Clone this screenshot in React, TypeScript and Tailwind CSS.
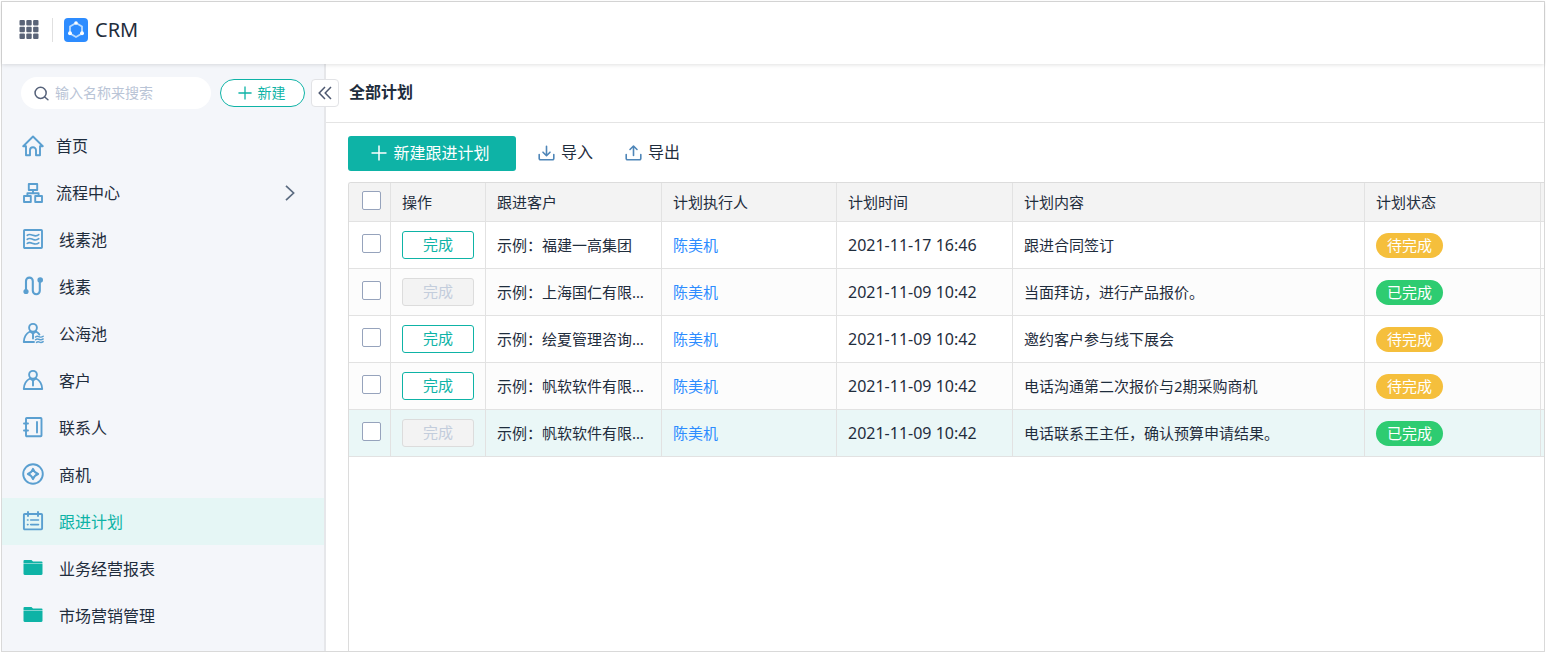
import { useState, type ReactNode } from 'react';

const BLUE = '#5a9fd0';

// 侧边栏图标，统一 22x22
function NavIcon({ children }: { children: ReactNode }) {
  return (
    <svg
      width="22"
      height="22"
      viewBox="0 0 22 22"
      fill="none"
      stroke={BLUE}
      strokeWidth="1.9"
      strokeLinecap="round"
      strokeLinejoin="round"
      aria-hidden="true"
    >
      {children}
    </svg>
  );
}

const HomeIcon = () => (
  <NavIcon>
    <path d="M1.2 11.2L11 1.5L20.8 11.2H18V20.2H14V15.2A3 3 0 0 0 8 15.2V20.2H4V11.2Z" />
  </NavIcon>
);

const FlowIcon = () => (
  <NavIcon>
    <rect x="6.8" y="2" width="8.4" height="6" />
    <rect x="2" y="14" width="6.8" height="6" />
    <rect x="13.2" y="14" width="6.8" height="6" />
    <path d="M11 8V11M5.4 14V11.2H16.6V14" />
  </NavIcon>
);

const PoolIcon = () => (
  <NavIcon>
    <rect x="2" y="2" width="18" height="18" rx="0.8" />
    <path
      strokeWidth="1.6"
      d="M5.2 7.3C7 5.6 9 6.5 11 7.3S15 8.2 16.8 6.6M5.2 11.4C7 9.7 9 10.6 11 11.4S15 12.3 16.8 10.7M5.2 15.5C7 13.8 9 14.7 11 15.5S15 16.4 16.8 14.8"
    />
  </NavIcon>
);

const ClueIcon = () => (
  <NavIcon>
    <path strokeWidth="2.1" d="M4 15V6A3.3 3.3 0 0 1 10.8 6V15.8A3.3 3.3 0 0 0 17.8 15.8V6.5" />
    <circle cx="4" cy="16.5" r="2.6" fill={BLUE} stroke="none" />
    <circle cx="18.2" cy="5" r="2.8" fill={BLUE} stroke="none" />
  </NavIcon>
);

const SeaIcon = () => (
  <NavIcon>
    <circle cx="11" cy="5.8" r="3.9" />
    <path d="M8 9.5C4 11.5 2 15 1.8 20H12M14 9.5C15.4 10.3 16.7 11.5 17.4 12.6M8 9.5L11 11.5L14 9.5M11 11.5V16.5" />
    <path
      strokeWidth="1.4"
      d="M13.5 15C15 13.8 16.2 14.2 17.5 14.8S20 15.2 21.2 14.2M13.5 17.7C15 16.5 16.2 16.9 17.5 17.5S20 17.9 21.2 16.9M14.5 20.4C15.6 19.6 16.6 19.7 17.5 20.2S20 20.6 21.2 19.6"
    />
  </NavIcon>
);

const CustomerIcon = () => (
  <NavIcon>
    <circle cx="11" cy="5.8" r="3.9" />
    <path d="M8 9.5C4 11.5 2 15 1.8 20H20.2C20 15 18 11.5 14 9.5L11 11.5L8 9.5M11 11.5V16.5" />
  </NavIcon>
);

const ContactIcon = () => (
  <NavIcon>
    <rect x="4" y="2" width="15.5" height="18.3" rx="0.8" />
    <path d="M15 6V16.5M2 7.5H6M2 14.5H6" />
  </NavIcon>
);

const ChanceIcon = () => (
  <NavIcon>
    <circle cx="11" cy="11" r="9.8" />
    <path d="M11 5.8Q12.2 9.8 16.2 11Q12.2 12.2 11 16.2Q9.8 12.2 5.8 11Q9.8 9.8 11 5.8Z" />
  </NavIcon>
);

const PlanIcon = () => (
  <NavIcon>
    <rect x="1.9" y="4" width="18.2" height="15.4" rx="0.8" />
    <path d="M6 2V6M16 2V6" />
    <path strokeWidth="1.6" d="M5.5 10H6M8.7 10H16.5M5.5 14.6H6M8.7 14.6H16.5" />
  </NavIcon>
);

const FolderIcon = () => (
  <svg width="22" height="22" viewBox="0 0 22 22" fill="#0eb3a6" aria-hidden="true">
    <path d="M1.5 4A1 1 0 0 1 2.5 3H9.5L11 4.4H19.5A1 1 0 0 1 20.5 5.4V6.4H1.5Z" />
    <path d="M1.5 7H20.5V16.5A1.5 1.5 0 0 1 19 18H3A1.5 1.5 0 0 1 1.5 16.5Z" />
  </svg>
);

function PlusIcon({ size }: { size: number }) {
  return (
    <svg width={size} height={size} viewBox="0 0 16 16" fill="none" stroke="currentColor" strokeWidth="1.5" aria-hidden="true">
      <path d="M8 0.5V15.5M0.5 8H15.5" />
    </svg>
  );
}

function TransferIcon({ up }: { up?: boolean }) {
  return (
    <svg width="17" height="17" viewBox="0 0 17 17" fill="none" stroke="#4f86b8" strokeWidth="1.6" strokeLinecap="round" strokeLinejoin="round" aria-hidden="true">
      <path d="M1.2 10.5V14.6A1.2 1.2 0 0 0 2.4 15.8H14.6A1.2 1.2 0 0 0 15.8 14.6V10.5" />
      <path d={up ? 'M8.5 11.5V2.2M5 5.5L8.5 2L12 5.5' : 'M8.5 2.2V11.5M5 8.2L8.5 11.7L12 8.2'} />
    </svg>
  );
}

const topNav = [
  { label: '首页', icon: <HomeIcon /> },
  { label: '流程中心', icon: <FlowIcon />, expandable: true },
];

const appNav = [
  { label: '线素池', icon: <PoolIcon /> },
  { label: '线素', icon: <ClueIcon /> },
  { label: '公海池', icon: <SeaIcon /> },
  { label: '客户', icon: <CustomerIcon /> },
  { label: '联系人', icon: <ContactIcon /> },
  { label: '商机', icon: <ChanceIcon /> },
  { label: '跟进计划', icon: <PlanIcon /> },
  { label: '业务经营报表', icon: <FolderIcon /> },
  { label: '市场营销管理', icon: <FolderIcon /> },
];

const plans = [
  { customer: '示例：福建一高集团', owner: '陈美机', time: '2021-11-17 16:46', content: '跟进合同签订', done: false },
  { customer: '示例：上海国仁有限公司', owner: '陈美机', time: '2021-11-09 10:42', content: '当面拜访，进行产品报价。', done: true },
  { customer: '示例：绘夏管理咨询公司', owner: '陈美机', time: '2021-11-09 10:42', content: '邀约客户参与线下展会', done: false },
  { customer: '示例：帆软软件有限公司', owner: '陈美机', time: '2021-11-09 10:42', content: '电话沟通第二次报价与2期采购商机', done: false },
  { customer: '示例：帆软软件有限公司', owner: '陈美机', time: '2021-11-09 10:42', content: '电话联系王主任，确认预算申请结果。', done: true },
];

const columns = ['操作', '跟进客户', '计划执行人', '计划时间', '计划内容', '计划状态'];

const cell = 'border-r border-b border-[#e2e2e2] px-[11px] truncate';
const checkCell = 'border-r border-b border-[#e2e2e2] pt-0 pr-0 pb-[3px] pl-[13px]';
const checkbox =
  'block size-[19px] appearance-none rounded-[2px] border border-[#96a3bc] bg-white checked:bg-[#0eb3a6]';

function Header() {
  return (
    <header className="relative z-10 flex h-[62px] shrink-0 items-center bg-white pb-[6px] pl-[17px] shadow-[0_1px_4px_rgba(0,0,0,0.12)]">
      <button type="button" aria-label="应用列表">
        <svg width="20" height="20" viewBox="0 0 20 20" fill="#5a6478">
          {[0, 6.8, 13.6].map((y) =>
            [0.5, 7.3, 14.1].map((x) => <rect key={`${x}-${y}`} x={x} y={y} width="5.4" height="5.4" rx="1" />)
          )}
        </svg>
      </button>
      <span className="ml-[13px] h-6 w-px bg-[#e0e0e0]" />
      <svg className="ml-[11px]" width="24" height="24" viewBox="0 0 24 24" aria-hidden="true">
        <rect width="24" height="24" rx="4" fill="#2d8cff" />
        <path d="M12 5L18 8.5V15.5L12 19L6 15.5V8.5Z" fill="none" stroke="#b9dbff" strokeWidth="1.8" />
        <circle cx="12" cy="5" r="1.8" fill="#fff" />
        <circle cx="18" cy="15.3" r="2" fill="#fff" />
        <circle cx="6" cy="15.3" r="2" fill="#fff" />
      </svg>
      <h1 className="ml-[7px] text-xl leading-6">CRM</h1>
    </header>
  );
}

function Sidebar() {
  const [active, setActive] = useState('跟进计划');

  return (
    <aside className="relative w-[324px] shrink-0 border-r-2 border-[#e6e7ea] bg-[#f4f6fa]">
      <div className="flex items-center gap-[9px] pt-[13px] pr-[19px] pb-[13px] pl-[19px]">
        <label className="flex h-8 min-w-0 flex-1 items-center rounded-full bg-white pl-[13px]">
          <svg width="17" height="17" viewBox="0 0 17 17" fill="none" stroke="#56627a" strokeWidth="1.7" strokeLinecap="round" aria-hidden="true">
            <circle cx="7.5" cy="7.8" r="6.3" />
            <path d="M12.2 12.4L15.8 15.6" />
          </svg>
          <input
            type="text"
            aria-label="搜索"
            placeholder="输入名称来搜索"
            className="ml-[6px] w-full min-w-0 bg-transparent text-sm outline-none placeholder:text-[#b9c4d6]"
          />
        </label>
        <button
          type="button"
          className="flex h-7 w-[85px] items-center justify-center gap-[6px] rounded-full border border-[#0eb3a6] bg-white pr-[2px] text-sm text-[#0eb3a6]"
        >
          <PlusIcon size={14} />
          新建
        </button>
      </div>
      <button
        type="button"
        aria-label="收起侧边栏"
        className="absolute top-[15px] -right-[15px] z-10 flex size-[28px] items-center justify-center rounded-[4px] border border-[#e2e3e6] bg-white"
      >
        <svg width="14" height="14" viewBox="0 0 14 14" fill="none" stroke="#4d5870" strokeWidth="1.5">
          <path d="M7 1L1.2 7L7 13M13 1L7.2 7L13 13" />
        </svg>
      </button>

      <nav className="text-base text-[#1f2d3d]">
        {topNav.map((item) => (
          <a key={item.label} href="#" className="flex h-[47px] items-center pr-[29px] pl-5">
            {item.icon}
            <span className="ml-3 flex-1">{item.label}</span>
            {item.expandable && (
              <svg width="10" height="16" viewBox="0 0 10 16" fill="none" stroke="#5b6b80" strokeWidth="1.7" aria-hidden="true">
                <path d="M1 0.8L8.6 8L1 15.2" />
              </svg>
            )}
          </a>
        ))}
        {appNav.map((item) => (
          <a
            key={item.label}
            href="#"
            onClick={() => setActive(item.label)}
            className={`flex h-[47px] items-center pl-5 ${active === item.label ? 'bg-[#e5f6f5] text-[#0eb3a6]' : ''}`}
          >
            <span className="pb-[2px]">{item.icon}</span>
            <span className="ml-[15px]">{item.label}</span>
          </a>
        ))}
      </nav>
    </aside>
  );
}

function PlanTable() {
  return (
    <div className="flex-1 overflow-hidden rounded-tl-[3px] border-t border-l border-[#dcdcdc]">
      <table className="w-full min-w-[1196px] table-fixed border-separate border-spacing-0 text-left text-[15px] leading-6">
        <colgroup>
          <col className="w-[42px]" />
          <col className="w-[95px]" />
          <col className="w-[176px]" />
          <col className="w-[175px]" />
          <col className="w-[176px]" />
          <col className="w-[352px]" />
          <col className="w-[176px]" />
          <col />
        </colgroup>
        <thead className="bg-[#f3f3f3]">
          <tr className="h-[39px]">
            <th className={checkCell}>
              <input type="checkbox" aria-label="全选" className={checkbox} />
            </th>
            {columns.map((name) => (
              <th key={name} className={`${cell} font-normal`}>{name}</th>
            ))}
            <th className="border-b border-[#e2e2e2] p-0" />
          </tr>
        </thead>
        <tbody>
          {plans.map((plan, i) => (
            <tr
              key={i}
              className={`h-[47px] ${i === plans.length - 1 ? 'bg-[#eaf7f7]' : i % 2 ? 'bg-[#fcfcfc]' : 'bg-white'}`}
            >
              <td className={checkCell}>
                <input type="checkbox" aria-label={`选择第${i + 1}行`} className={checkbox} />
              </td>
              <td className={cell}>
                <button
                  type="button"
                  disabled={plan.done}
                  className="block h-7 w-[72px] rounded-[3px] border border-[#0eb3a6] bg-white pb-[2px] leading-6 text-[#0eb3a6] disabled:border-[#dcdcdc] disabled:bg-[#f3f3f3] disabled:text-[#c3cddc]"
                >
                  完成
                </button>
              </td>
              <td className={cell}>{plan.customer}</td>
              <td className={cell}>
                <a href="#" className="text-[#2d8cff]">{plan.owner}</a>
              </td>
              <td className={`${cell} text-base`}>{plan.time}</td>
              <td className={cell}>{plan.content}</td>
              <td className={cell}>
                <span
                  className={`block h-[25px] w-[67px] rounded-full text-center leading-[25px] text-white ${
                    plan.done ? 'bg-[#2ecc71]' : 'bg-[#f5bf3c]'
                  }`}
                >
                  {plan.done ? '已完成' : '待完成'}
                </span>
              </td>
              <td className="border-b border-[#e2e2e2] p-0" />
            </tr>
          ))}
        </tbody>
      </table>
    </div>
  );
}

export default function App() {
  return (
    <div
      lang="zh-CN"
      className="flex min-h-screen flex-col bg-white p-px font-['Noto_Sans','Noto_Sans_CJK_SC',sans-serif] text-[#1f2d3d]"
    >
      <div className="flex flex-1 flex-col border border-[#d9d9d9]">
        <Header />
        <div className="flex flex-1">
          <Sidebar />
          <main className="flex min-w-0 flex-1 flex-col">
            <div className="flex h-[59px] items-center border-b border-[#e4e4e4] pb-[2px] pl-[23px]">
              <h2 className="text-base font-bold">全部计划</h2>
            </div>
            <div className="flex flex-1 flex-col pt-[13px] pl-[22px]">
              <div className="flex items-center text-base">
                <button
                  type="button"
                  className="flex h-[35px] w-[168px] items-center justify-center gap-[6px] rounded-[3px] bg-[#0eb3a6] pr-[3px] pb-px text-white"
                >
                  <PlusIcon size={16} />
                  新建跟进计划
                </button>
                <button type="button" className="ml-[22px] flex items-center gap-[6px] pb-[3px]">
                  <TransferIcon />
                  导入
                </button>
                <button type="button" className="ml-[32px] flex items-center gap-[6px] pb-[3px]">
                  <TransferIcon up />
                  导出
                </button>
              </div>
              <div className="mt-[11px] flex flex-1">
                <PlanTable />
              </div>
            </div>
          </main>
        </div>
      </div>
    </div>
  );
}
